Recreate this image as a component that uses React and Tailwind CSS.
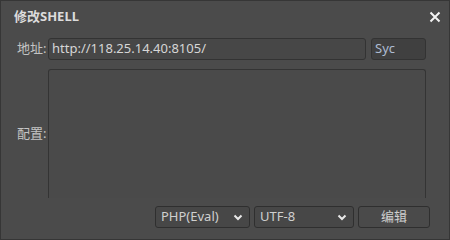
import React from 'react';

function Select({ value, width }) {
  return (
    <div className={`flex items-center justify-between h-[22px] ${width} border border-[#2f2f2f] rounded-[3px] bg-[#474747] pl-[5px] pr-[6px] text-[13px] text-[#cfcfcf] whitespace-nowrap`}>
      <span>{value}</span>
      <svg width="10" height="7" viewBox="0 0 10 7" className="text-[#e8e8e8]">
        <path d="M1.5 1.5 L5 5 L8.5 1.5" stroke="currentColor" strokeWidth="2" fill="none" />
      </svg>
    </div>
  );
}

export default function App() {
  return (
    <div
      className="w-[450px] h-[240px] bg-[#4b4b4b] border border-[#363636] flex flex-col text-[#cfcfcf] overflow-hidden"
      style={{ fontFamily: '"Noto Sans", "Noto Sans CJK SC", sans-serif' }}
    >
      <div className="flex items-center justify-between h-[32px] pl-[13px] pr-[8px] shrink-0">
        <span className="text-[13px] font-bold text-[#dcdcdc]">修改SHELL</span>
        <svg width="12" height="12" viewBox="0 0 12 12">
          <path d="M1.5 1.5 L10.5 10.5 M10.5 1.5 L1.5 10.5" stroke="#f2f2f2" strokeWidth="2" />
        </svg>
      </div>

      <div className="flex items-center h-[22px] shrink-0 mt-[5px] pl-[16px] pr-[23px] gap-[3px]">
        <span className="w-[28px] shrink-0 whitespace-nowrap text-[13px] text-[#c4c4c4]">地址:</span>
        <div className="flex-1 h-[22px] border border-[#333333] rounded-[3px] bg-[#474747] px-[3px] flex items-center text-[13px] text-[#d6d6d6] whitespace-nowrap">
          http://118.25.14.40:8105/
        </div>
        <div className="w-[55px] ml-[2px] h-[22px] border border-[#333333] rounded-[3px] bg-[#404040] px-[3px] flex items-center text-[13px] text-[#aebcd2]">
          Syc
        </div>
      </div>

      <div className="flex items-center h-[129px] shrink-0 mt-[9px] pl-[16px] pr-[23px] gap-[3px]">
        <span className="w-[28px] shrink-0 whitespace-nowrap text-[13px] text-[#c4c4c4]">配置:</span>
        <div className="flex-1 h-[129px] border border-b-0 border-[#343434] rounded-t-[3px] bg-[#4a4a4a]" />
      </div>

      <div className="flex items-center justify-end gap-[4px] h-[22px] shrink-0 mt-[8px] pr-[19px]">
        <Select value="PHP(Eval)" width="w-[95px]" />
        <Select value="UTF-8" width="w-[100px]" />
        <div className="w-[72px] h-[22px] border border-[#2f2f2f] rounded-[3px] bg-[#4a4a4a] flex items-center justify-center text-[13px] text-[#cfcfcf]">
          编辑
        </div>
      </div>
    </div>
  );
}
